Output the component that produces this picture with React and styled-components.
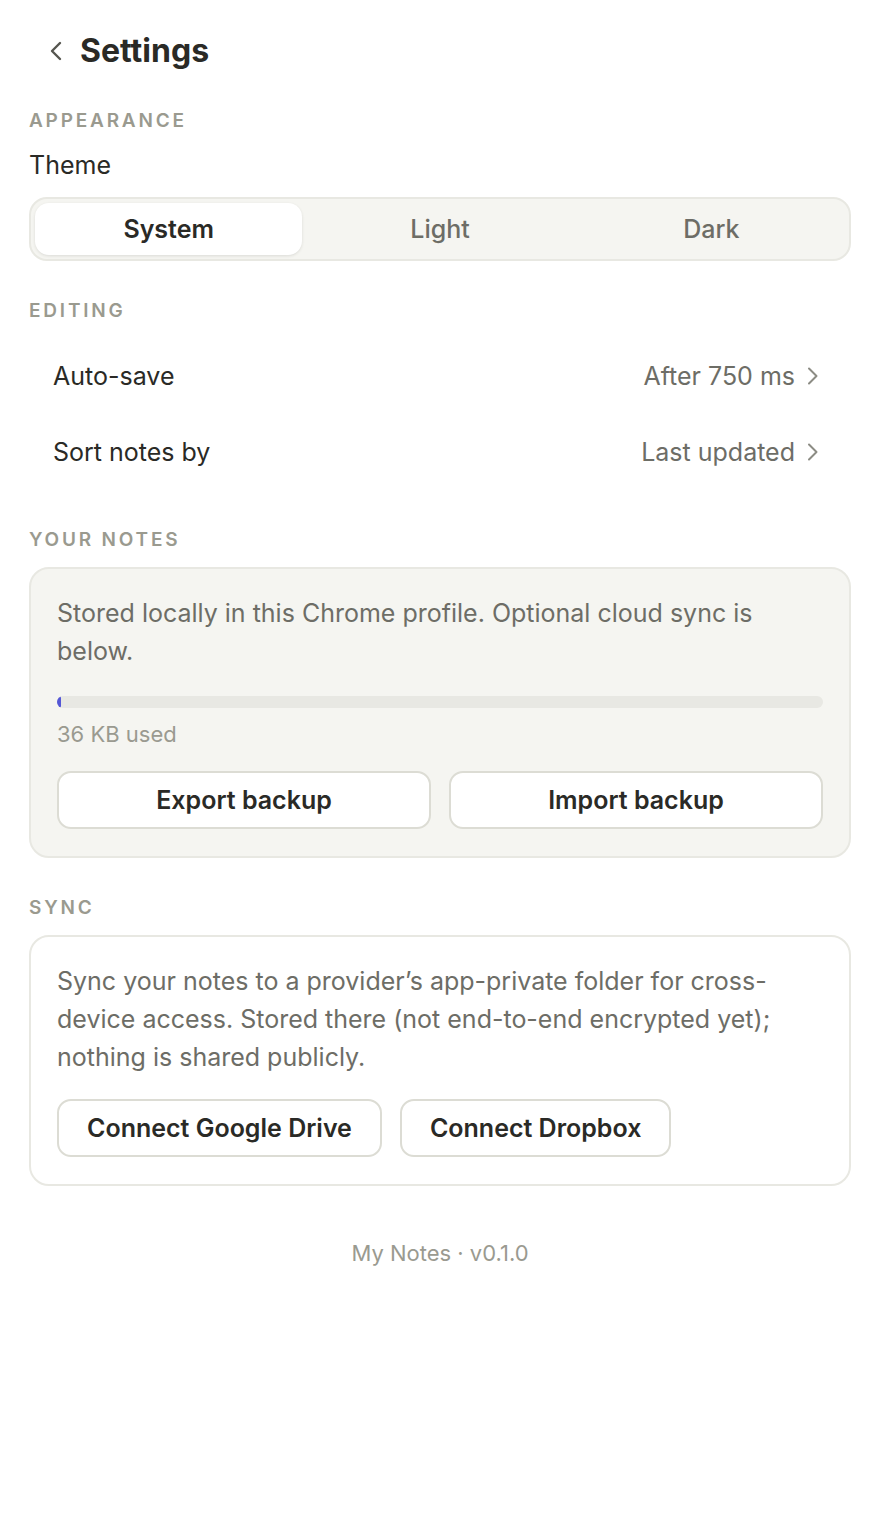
import styled, { createGlobalStyle } from "styled-components";

const GlobalStyle = createGlobalStyle`
  * {
    box-sizing: border-box;
  }
  body {
    margin: 0;
    background: #ffffff;
    font-family: Inter, "Noto Sans", "Liberation Sans", sans-serif;
    color: #2a2a26;
    -webkit-font-smoothing: antialiased;
  }
`;

const THEMES = ["System", "Light", "Dark"];

const EDIT_ROWS = [
  { label: "Auto-save", value: "After 750 ms" },
  { label: "Sort notes by", value: "Last updated" },
];

function ChevronLeft() {
  return (
    <svg width="14" height="20" viewBox="0 0 14 20" fill="none">
      <polyline
        points="11,2 3,10 11,18"
        stroke="#55554f"
        strokeWidth="2.4"
        strokeLinecap="round"
        strokeLinejoin="round"
      />
    </svg>
  );
}

function ChevronRight() {
  return (
    <svg width="12" height="18" viewBox="0 0 12 18" fill="none">
      <polyline
        points="2,1.5 9.5,9 2,16.5"
        stroke="#8c8c84"
        strokeWidth="2"
        strokeLinecap="round"
        strokeLinejoin="round"
      />
    </svg>
  );
}

export default function App() {
  const usedPercent = 0.5;

  return (
    <>
      <GlobalStyle />
      <Page>
        <Header>
          <BackButton aria-label="Back">
            <ChevronLeft />
          </BackButton>
          <Title>Settings</Title>
        </Header>

        <Section>
          <SectionLabel>Appearance</SectionLabel>
          <FieldLabel>Theme</FieldLabel>
          <Segmented>
            {THEMES.map((t) => (
              <Segment key={t} $active={t === "System"}>
                {t}
              </Segment>
            ))}
          </Segmented>
        </Section>

        <Section>
          <SectionLabel>Editing</SectionLabel>
          <RowList>
            {EDIT_ROWS.map((row) => (
              <Row key={row.label}>
                <RowLabel>{row.label}</RowLabel>
                <RowValue>
                  {row.value}
                  <ChevronRight />
                </RowValue>
              </Row>
            ))}
          </RowList>
        </Section>

        <Section>
          <SectionLabel>Your notes</SectionLabel>
          <Card $muted>
            <CardText>
              Stored locally in this Chrome profile. Optional cloud sync is
              below.
            </CardText>
            <Progress>
              <ProgressFill style={{ width: `${usedPercent}%` }} />
            </Progress>
            <Usage>36 KB used</Usage>
            <ButtonRow $fill>
              <Button>Export backup</Button>
              <Button>Import backup</Button>
            </ButtonRow>
          </Card>
        </Section>

        <Section>
          <SectionLabel>Sync</SectionLabel>
          <Card>
            <CardText>
              Sync your notes to a provider’s app-private folder for
              cross-device access. Stored there (not end-to-end encrypted yet);
              nothing is shared publicly.
            </CardText>
            <ButtonRow>
              <Button>Connect Google Drive</Button>
              <Button>Connect Dropbox</Button>
            </ButtonRow>
          </Card>
        </Section>

        <Footer>My Notes · v0.1.0</Footer>
      </Page>
    </>
  );
}

const Page = styled.main`
  width: 880px;
  padding: 25px 29px 60px;
  display: flex;
  flex-direction: column;
`;

const Header = styled.header`
  height: 52px;
  display: flex;
  align-items: center;
  gap: 17px;
  padding-left: 20px;
  margin-bottom: 33px;
`;

const BackButton = styled.button`
  border: 0;
  background: none;
  padding: 0;
  display: flex;
  align-items: center;
  cursor: pointer;
`;

const Title = styled.h1`
  margin: 0;
  font-size: 32px;
  font-weight: 700;
  line-height: 1;
  color: #2a2a26;
`;

const Section = styled.section`
  display: flex;
  flex-direction: column;
  margin-bottom: 39px;
`;

const SectionLabel = styled.h2`
  margin: 0 0 16px;
  height: 22px;
  font-size: 19px;
  line-height: 22px;
  font-weight: 600;
  letter-spacing: 2.8px;
  text-transform: uppercase;
  color: #9a9a8f;
`;

const FieldLabel = styled.div`
  font-size: 25px;
  line-height: 30px;
  margin: 2px 0 17px;
  color: #2a2a26;
`;

const Segmented = styled.div`
  display: grid;
  grid-template-columns: repeat(3, 1fr);
  gap: 4px;
  padding: 4px;
  height: 64px;
  background: #f5f5f1;
  border: 2px solid #e8e8e2;
  border-radius: 18px;
`;

const Segment = styled.button`
  border: 0;
  font-family: inherit;
  font-size: 25px;
  font-weight: ${(p) => (p.$active ? 600 : 500)};
  color: ${(p) => (p.$active ? "#2a2a26" : "#6d6d66")};
  background: ${(p) => (p.$active ? "#ffffff" : "transparent")};
  border-radius: 14px;
  box-shadow: ${(p) =>
    p.$active ? "0 1px 3px rgba(40, 40, 30, 0.12)" : "none"};
  cursor: pointer;
`;

const RowList = styled.div`
  display: flex;
  flex-direction: column;
`;

const Row = styled.div`
  height: 76px;
  display: flex;
  align-items: center;
  justify-content: space-between;
  padding: 0 32px 0 24px;
`;

const RowLabel = styled.span`
  font-size: 25px;
  color: #2a2a26;
`;

const RowValue = styled.span`
  display: flex;
  align-items: center;
  gap: 12px;
  font-size: 25px;
  color: #6d6d66;
`;

const Card = styled.div`
  display: flex;
  flex-direction: column;
  padding: 25px 26px 27px;
  border: 2px solid #e8e8e2;
  border-radius: 20px;
  background: ${(p) => (p.$muted ? "#f5f5f1" : "#ffffff")};
`;

const CardText = styled.p`
  margin: 0 0 23px;
  font-size: 25px;
  line-height: 38px;
  color: #6d6d66;
`;

const Progress = styled.div`
  height: 12px;
  border-radius: 6px;
  background: #e8e8e3;
  overflow: hidden;
  margin-top: 3px;
`;

const ProgressFill = styled.div`
  height: 100%;
  min-width: 4px;
  background: #5457d6;
  border-radius: 6px;
`;

const Usage = styled.div`
  margin: 12px 0 23px;
  font-size: 22px;
  line-height: 28px;
  color: #9a9a90;
`;

const ButtonRow = styled.div`
  display: ${(p) => (p.$fill ? "grid" : "flex")};
  grid-template-columns: 1fr 1fr;
  gap: 18px;
`;

const Button = styled.button`
  height: 58px;
  padding: 0 28px;
  font-family: inherit;
  font-size: 25px;
  font-weight: 600;
  color: #2a2a26;
  background: #ffffff;
  border: 2px solid #dcdcd4;
  border-radius: 14px;
  cursor: pointer;
`;

const Footer = styled.footer`
  margin-top: 14px;
  text-align: center;
  font-size: 22px;
  line-height: 28px;
  color: #9a9a90;
`;
